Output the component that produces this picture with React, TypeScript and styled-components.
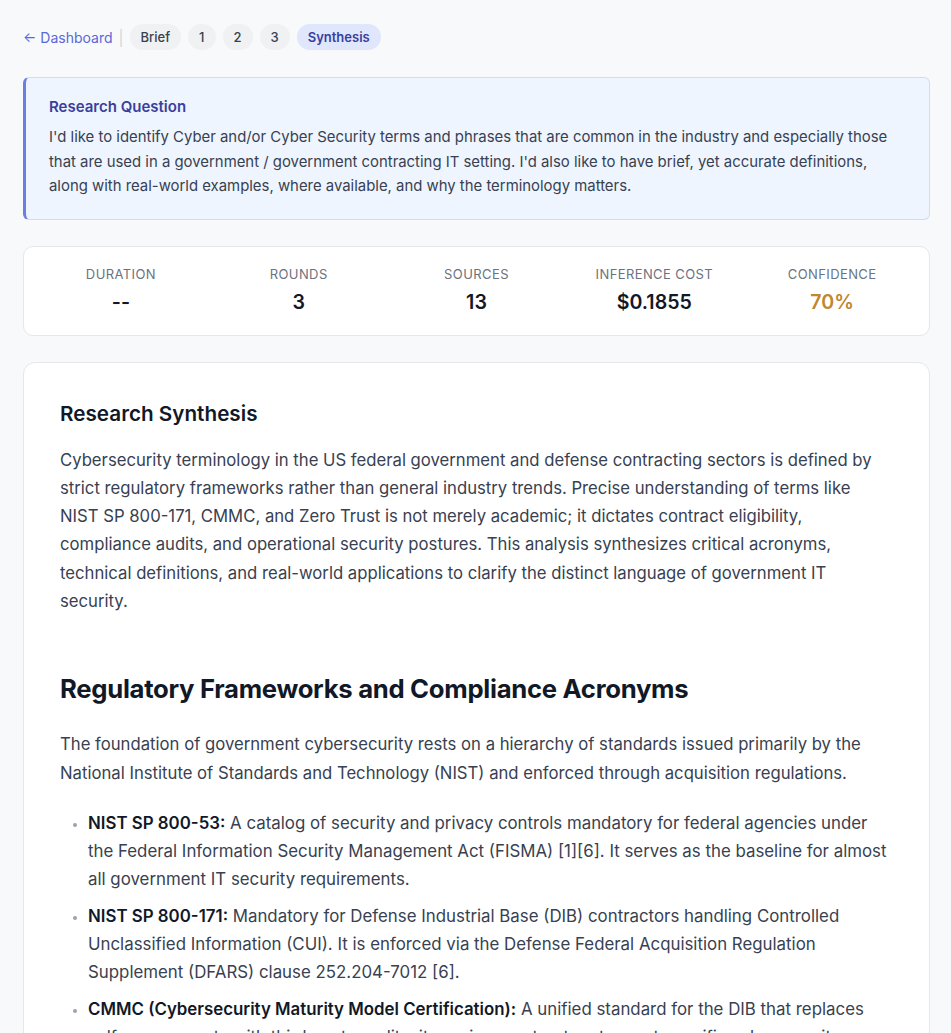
import styled, { createGlobalStyle } from "styled-components";

const GlobalStyle = createGlobalStyle`
  body {
    margin: 0;
    background: #f8f9fb;
    font-family: "Inter", "Noto Sans", sans-serif;
    color: #374151;
  }
`;

const Page = styled.div`
  padding: 24px 21px 40px 23px;
  display: flex;
  flex-direction: column;
`;

const NavBar = styled.nav`
  display: flex;
  align-items: center;
  gap: 7px;
  height: 26px;
  margin-bottom: 27px;
`;

const BackLink = styled.a`
  color: #5b68d8;
  font-size: 14px;
  text-decoration: none;
  cursor: pointer;
`;

const Divider = styled.span`
  color: #d1d5db;
  font-size: 15px;
  margin: 0 -1px 0 -1px;
`;

const Pill = styled.button<{ $active?: boolean }>`
  border: none;
  height: 26px;
  padding: 0 11px;
  border-radius: 13px;
  font-family: inherit;
  font-size: 13px;
  font-weight: ${(p) => (p.$active ? 600 : 500)};
  background: ${(p) => (p.$active ? "#e0e7fd" : "#f0f1f3")};
  color: ${(p) => (p.$active ? "#3a3f9c" : "#374151")};
  cursor: pointer;
`;

const QuestionBox = styled.section`
  background: #eff5ff;
  border: 1px solid #cfdcf3;
  border-left: 3px solid #6b7fe0;
  border-radius: 6px;
  padding: 19px 24px 20px 23px;
  margin-bottom: 26px;
`;

const QuestionTitle = styled.h3`
  margin: 0 0 9px;
  font-size: 15px;
  font-weight: 600;
  color: #3a3f9c;
`;

const QuestionText = styled.p`
  margin: 0;
  font-size: 14.9px;
  line-height: 24.5px;
  color: #374151;
`;

const StatsCard = styled.section`
  background: #fff;
  border: 1px solid #e5e7eb;
  border-radius: 10px;
  padding: 19px 8px 21px;
  display: grid;
  grid-template-columns: repeat(5, 1fr);
  margin-bottom: 26px;
`;

const Stat = styled.div`
  display: flex;
  flex-direction: column;
  align-items: center;
  gap: 8px;
`;

const StatLabel = styled.span`
  font-size: 13px;
  line-height: 16px;
  letter-spacing: 0.4px;
  text-transform: uppercase;
  color: #6b7280;
`;

const StatValue = styled.span<{ $accent?: boolean }>`
  font-size: 19.6px;
  line-height: 24px;
  font-weight: 600;
  color: ${(p) => (p.$accent ? "#c0872c" : "#111827")};
`;

const ReportCard = styled.article`
  background: #fff;
  border: 1px solid #e5e7eb;
  border-radius: 12px;
  padding: 38px 36px 40px;
`;

const Title = styled.h1`
  margin: 0 0 20px;
  font-size: 20.7px;
  font-weight: 600;
  color: #111827;
`;

const SectionTitle = styled.h2`
  margin: 58px 0 26px;
  font-size: 25.7px;
  font-weight: 700;
  letter-spacing: -0.3px;
  color: #111827;
`;

const Paragraph = styled.p`
  margin: 0 0 22px;
  font-size: 16.7px;
  line-height: 28.3px;
  color: #374151;
`;

const List = styled.ul`
  margin: 0;
  padding: 0 6px 0 28px;
`;

const Item = styled.li`
  font-size: 16.85px;
  line-height: 28.3px;
  margin-bottom: 8px;
  color: #374151;

  &::marker {
    color: #9ca3af;
    font-size: 13px;
  }

  strong {
    color: #111827;
    font-weight: 600;
  }
`;

const stats = [
  { label: "Duration", value: "--" },
  { label: "Rounds", value: "3" },
  { label: "Sources", value: "13" },
  { label: "Inference Cost", value: "$0.1855" },
  { label: "Confidence", value: "70%", accent: true },
];

export default function App() {
  return (
    <>
      <GlobalStyle />
      <Page>
        <NavBar>
          <BackLink>← Dashboard</BackLink>
          <Divider>|</Divider>
          <Pill>Brief</Pill>
          <Pill>1</Pill>
          <Pill>2</Pill>
          <Pill>3</Pill>
          <Pill $active>Synthesis</Pill>
        </NavBar>

        <QuestionBox>
          <QuestionTitle>Research Question</QuestionTitle>
          <QuestionText>
            I'd like to identify Cyber and/or Cyber Security terms and phrases that are common in
            the industry and especially those that are used in a government / government
            contracting IT setting. I'd also like to have brief, yet accurate definitions, along
            with real-world examples, where available, and why the terminology matters.
          </QuestionText>
        </QuestionBox>

        <StatsCard>
          {stats.map((s) => (
            <Stat key={s.label}>
              <StatLabel>{s.label}</StatLabel>
              <StatValue $accent={s.accent}>{s.value}</StatValue>
            </Stat>
          ))}
        </StatsCard>

        <ReportCard>
          <Title>Research Synthesis</Title>
          <Paragraph>
            Cybersecurity terminology in the US federal government and defense contracting sectors
            is defined by strict regulatory frameworks rather than general industry trends.
            Precise understanding of terms like NIST SP 800-171, CMMC, and Zero Trust is not
            merely academic; it dictates contract eligibility, compliance audits, and operational
            security postures. This analysis synthesizes critical acronyms, technical definitions,
            and real-world applications to clarify the distinct language of government IT
            security.
          </Paragraph>

          <SectionTitle>Regulatory Frameworks and Compliance Acronyms</SectionTitle>
          <Paragraph>
            The foundation of government cybersecurity rests on a hierarchy of standards issued
            primarily by the National Institute of Standards and Technology (NIST) and enforced
            through acquisition regulations.
          </Paragraph>
          <List>
            <Item>
              <strong>NIST SP 800-53:</strong> A catalog of security and privacy controls mandatory
              for federal agencies under the Federal Information Security Management Act (FISMA)
              [1][6]. It serves as the baseline for almost all government IT security requirements.
            </Item>
            <Item>
              <strong>NIST SP 800-171:</strong> Mandatory for Defense Industrial Base (DIB)
              contractors handling Controlled Unclassified Information (CUI). It is enforced via the
              Defense Federal Acquisition Regulation Supplement (DFARS) clause 252.204-7012 [6].
            </Item>
            <Item>
              <strong>CMMC (Cybersecurity Maturity Model Certification):</strong> A unified
              standard for the DIB that replaces self-assessments with third-party audits; it
              requires contractors to meet specific cybersecurity maturity levels before contract
              award [2][6].
            </Item>
          </List>
        </ReportCard>
      </Page>
    </>
  );
}
